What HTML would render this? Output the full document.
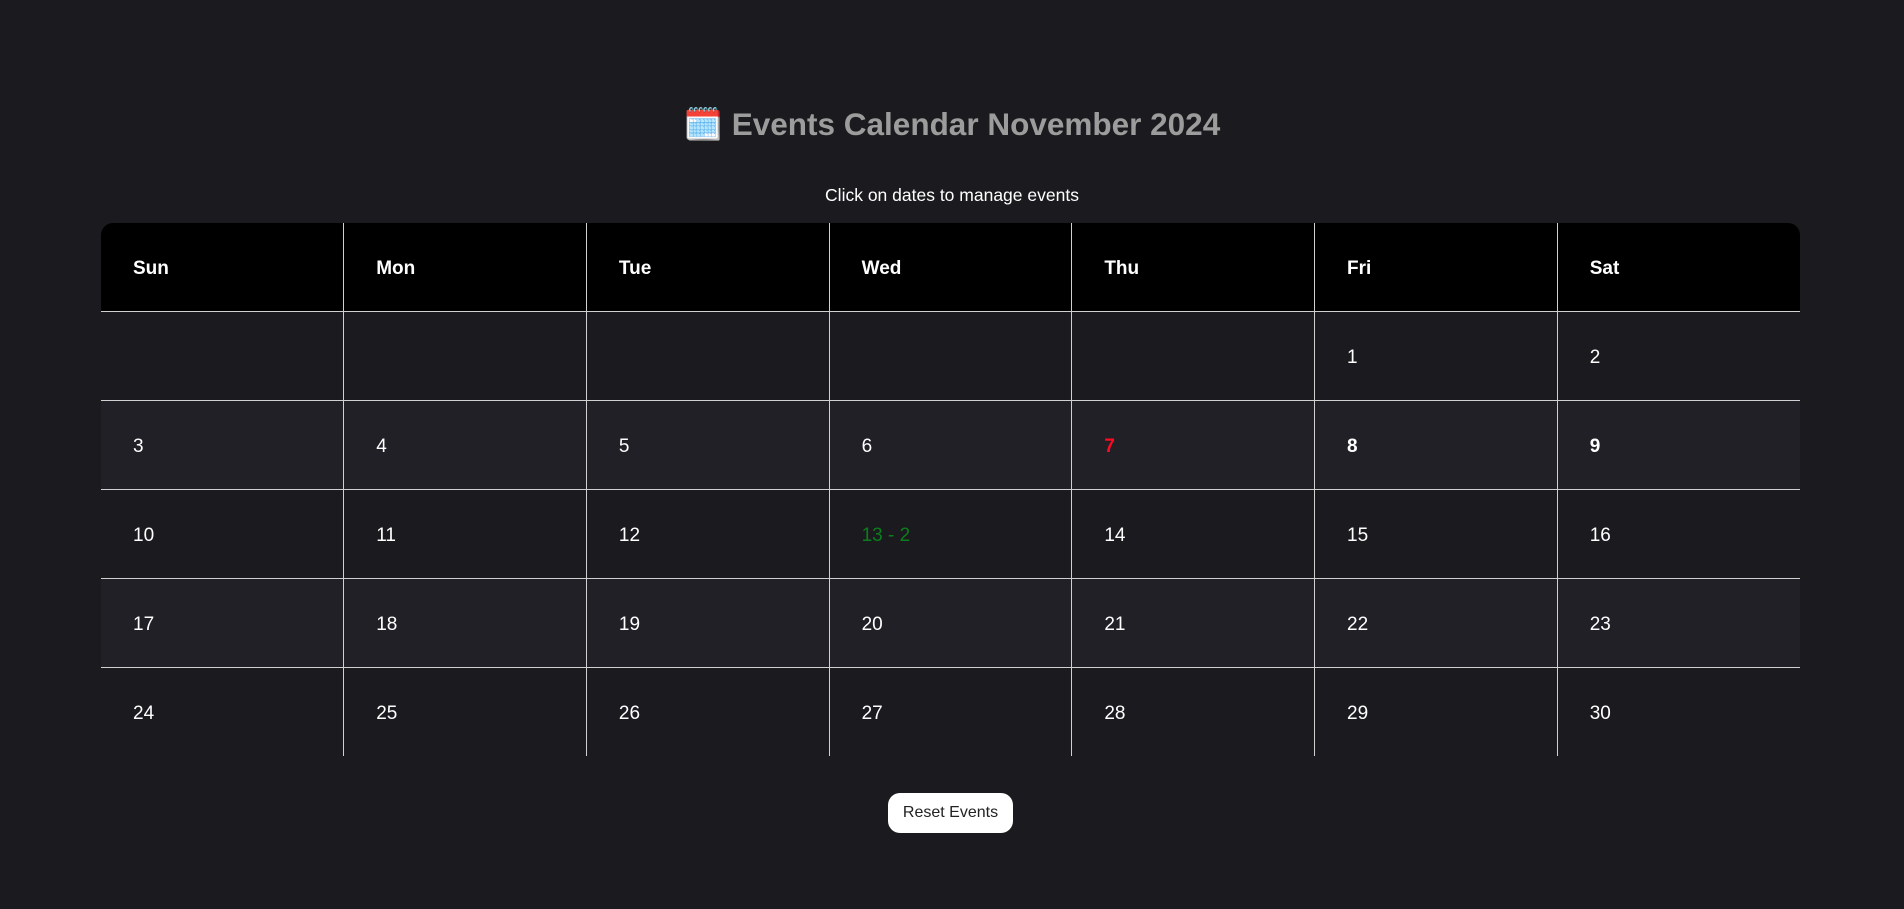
<!DOCTYPE html>
<html><head><meta charset="utf-8"><style>
html,body{margin:0;padding:0;background:#1b1b1f;width:1904px;height:909px;overflow:hidden;font-family:"Liberation Sans",Arial,sans-serif;}
h1{position:absolute;top:104px;left:0;width:1904px;margin:0;text-align:center;font-size:31.5px;font-weight:bold;color:#9c9c9c;line-height:40px;}
.sub{position:absolute;top:184px;left:0;width:1904px;text-align:center;font-size:17.5px;color:#fff;line-height:22px;}
table{position:absolute;left:101px;top:223px;width:1699px;border-collapse:collapse;table-layout:fixed;border-radius:12px;overflow:hidden;}
th,td{text-align:left;padding:3px 0 0 32px;color:#fff;font-size:19px;border:1px solid #d0d0d0;}
th{background:#000;height:85px;font-weight:bold;border-top:none;}
td{height:85px;}
tr th:first-child,tr td:first-child{border-left:none;}
tr th:last-child,tr td:last-child{border-right:none;}
tr:last-child td{border-bottom:none;}
tr.a td{background:#1b1b1f;} tr.b td{background:#202026;}
.btn{position:absolute;left:888px;top:793px;width:125px;height:40px;background:#fff;border-radius:12px;color:#222;font-size:16px;line-height:40px;text-align:center;}
</style></head><body>
<h1>🗓️ Events Calendar November 2024</h1>
<div class="sub">Click on dates to manage events</div>
<table>
<tr><th>Sun</th><th>Mon</th><th>Tue</th><th>Wed</th><th>Thu</th><th>Fri</th><th>Sat</th></tr>
<tr class="a"><td></td><td></td><td></td><td></td><td></td><td>1</td><td>2</td></tr>
<tr class="b"><td>3</td><td>4</td><td>5</td><td>6</td><td style="color:#ff0a22;font-weight:bold">7</td><td style="font-weight:bold">8</td><td style="font-weight:bold">9</td></tr>
<tr class="a"><td>10</td><td>11</td><td>12</td><td style="color:#0b7d1c">13 - 2</td><td>14</td><td>15</td><td>16</td></tr>
<tr class="b"><td>17</td><td>18</td><td>19</td><td>20</td><td>21</td><td>22</td><td>23</td></tr>
<tr class="a"><td>24</td><td>25</td><td>26</td><td>27</td><td>28</td><td>29</td><td>30</td></tr>
</table>
<div class="btn">Reset Events</div>
</body></html>
